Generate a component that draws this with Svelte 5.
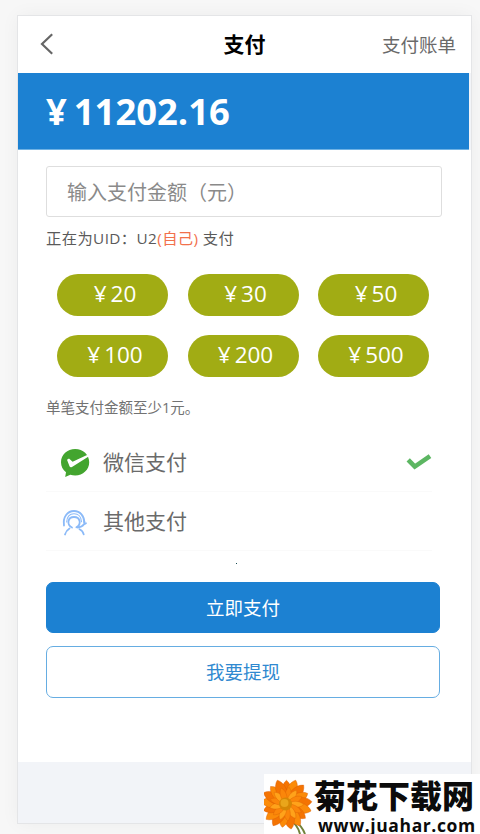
<script lang="ts">
	interface PayMethod {
		id: string;
		label: string;
	}

	const balance = 11202.16;
	const uid = 'U2';
	const presets = [20, 30, 50, 100, 200, 500];
	const methods: PayMethod[] = [
		{ id: 'wechat', label: '微信支付' },
		{ id: 'other', label: '其他支付' }
	];

	// outer and inner flower petals, in degrees
	const outerPetals = Array.from({ length: 17 }, (_, i) => i * (360 / 17));
	const innerPetals = Array.from({ length: 13 }, (_, i) => i * (360 / 13) + 9);

	let amount = $state('');
	let method = $state('wechat');
</script>

<div class="screen">
	<main class="phone">
		<header class="navbar">
			<button type="button" class="back" aria-label="返回">
				<svg width="14" height="22" viewBox="0 0 14 22">
					<path d="M12.2 1.3 2 11l10.2 9.7" fill="none" stroke="#666" stroke-width="2.2" />
				</svg>
			</button>
			<h1>支付</h1>
			<a class="bill" href="#bill">支付账单</a>
		</header>

		<section class="balance">
			<span class="yen">¥</span>{balance.toFixed(2)}
		</section>

		<section class="content">
			<input class="amount" type="text" placeholder="输入支付金额（元）" bind:value={amount} />
			<p class="target">正在为UID：{uid}<span class="self">(自己)</span> 支付</p>

			<div class="presets">
				{#each presets as preset}
					<button type="button" class="preset" onclick={() => (amount = String(preset))}>
						<span class="yen">¥</span>{preset}
					</button>
				{/each}
			</div>

			<p class="hint">单笔支付金额至少1元。</p>

			<div class="methods">
				{#each methods as item}
					<button type="button" class="method" onclick={() => (method = item.id)}>
						<span class="icon">
							{#if item.id === 'wechat'}
								<svg width="30" height="30" viewBox="0 0 30 30">
									<path
										d="M15.2 1C7.3 1 1 6.9 1 14.2c0 4.1 1.9 7.6 5 10.1L5.2 29l5.1-2.3c1.6.5 3.2.7 4.9.7 7.9 0 14-5.9 14-13.2S23.1 1 15.2 1Z"
										fill="#43a52f"
									/>
									<path d="m7 11.8 2-1.3 3.6 3.3L27.6 6.8 28.6 8.500 12 18.9c-1.2.6-2 .4-2.5-.7Z" fill="#fff" />
								</svg>
							{:else}
								<svg width="26" height="28" viewBox="0 0 26 28" fill="none" stroke="#8bbaf8" stroke-linecap="round">
									<path d="M2 17.5C.7 9 5.500 3 12 3c6.3 0 10.2 5 10.3 11.3" stroke-width="1.8" />
									<path d="M4.7 14C5 8.8 8 5.8 12 5.8c4.2 0 7.3 3 7.500 8" stroke-width="1.1" />
									<path d="M10 19.5C4.5 16.8 5.500 9 12 9c6.5 0 7.6 7.500 2.4 10.3" stroke-width="1.8" />
									<path d="M22.3 13.3v3l1.7-1M22 16.3c-1.5 2.2-4 3-6.5 3.200M3 26.5c.8-3 2.3-4.7 4.5-6M17.5 21.2c2.1 1 3.7 3 4.2 5.2" stroke-width="1.8" />
								</svg>
							{/if}
						</span>
						<span class="label">{item.label}</span>
						{#if method === item.id}
							<svg class="check" width="26" height="18" viewBox="0 0 26 18">
								<path d="m2.2 6.8 6.6 6.8L24 3.2" fill="none" stroke="#5cb662" stroke-width="4.6" />
							</svg>
						{/if}
					</button>
				{/each}
			</div>

			<button type="button" class="btn primary">立即支付</button>
			<button type="button" class="btn outline">我要提现</button>
			<i class="speck"></i>
		</section>
	</main>

	<aside class="brand">
		<svg class="flower" width="50" height="60" viewBox="0 0 50 60">
			<path d="M25 45q9 6 11 15M31 47q7 5 10 13" fill="none" stroke="#71823a" stroke-width="2" />
			<g transform="translate(22.5 30)">
				{#each outerPetals as angle, i}
					<path
						d="M0 0C-8-9-6-21 0-25.500 6-21 8-9 0 0Z"
						transform="rotate({angle}) scale({i % 3 ? 1 : 0.93})"
						fill={i % 2 ? '#fb8b09' : '#f47403'}
						stroke="#d95b04"
						stroke-width=".4"
					/>
				{/each}
				{#each innerPetals as angle, i}
					<path
						d="M0 0C-4-6-4-13 0-17 4-13 4-6 0 0Z"
						transform="rotate({angle})"
						fill={i % 2 ? '#ffa21a' : '#fb860a'}
						stroke="#dd6504"
						stroke-width=".4"
					/>
				{/each}
				<circle cx="-1" cy="0" r="6.5" fill="#d68705" />
				<circle cx="-2" cy="-1" r="4" fill="#e9a51b" />
			</g>
		</svg>
		<div class="brand-text">
			<strong>菊花下载网</strong>
			<span>www.juahar.com</span>
		</div>
	</aside>
</div>

<style>
	:global(body) {
		background: #f7f7f7;
	}

	.screen {
		position: relative;
		box-sizing: border-box;
		width: 480px;
		height: 834px;
		padding: 16px 9px 0 18px;
		overflow: hidden;
		font-family: 'Open Sans', 'Noto Sans CJK SC', sans-serif;
		color: #6a6a6a;
	}

	.phone {
		display: flex;
		flex-direction: column;
		height: 807px;
		background: #f2f4f8;
		box-shadow: 0 0 0 1px #e4e5e7, 0 0 18px rgba(0, 0, 0, 0.05);
	}

	button {
		margin: 0;
		padding: 0;
		border: 0;
		background: none;
		font: inherit;
		color: inherit;
	}

	.navbar {
		display: grid;
		grid-template-columns: 1fr auto 1fr;
		align-items: center;
		height: 57px;
		padding: 0 15px 2px 22px;
		box-sizing: border-box;
		background: #fff;
	}

	.back {
		justify-self: start;
		height: 22px;
		line-height: 0;
	}

	.navbar h1 {
		margin: 0 0 0 -7px;
		font-size: 21px;
		line-height: 30px;
		font-weight: 700;
		color: #000;
	}

	.bill {
		justify-self: end;
		font-size: 18.5px;
		color: #6a6a6a;
		text-decoration: none;
	}

	.balance {
		height: 77px;
		margin-right: 2px;
		padding-left: 28px;
		border-bottom: 1px solid #6fb2e4;
		box-sizing: border-box;
		background: #1c81d2;
		font-size: 36.4px;
		line-height: 77px;
		font-weight: 700;
		color: #fff;
	}

	.balance .yen {
		margin-right: 7px;
	}

	.content {
		position: relative;
		height: 612px;
		box-sizing: border-box;
		padding: 16px 31px 0 28px;
		background: #fff;
	}

	.amount {
		display: block;
		box-sizing: border-box;
		width: 396px;
		height: 51px;
		padding: 2px 20px 0;
		border: 1px solid #dedede;
		border-radius: 3px;
		background: #fff;
		font-family: inherit;
		font-size: 20px;
		color: #666;
	}

	.amount::placeholder {
		color: #8a8a8a;
		opacity: 1;
	}

	.target {
		margin: 9px 0 0;
		font-size: 15.3px;
		line-height: 24px;
		letter-spacing: 0.4px;
		color: #5a5a5a;
	}

	.self {
		color: #f2714c;
	}

	.presets {
		display: grid;
		grid-template-columns: repeat(3, 111px);
		gap: 19px 19.5px;
		margin: 24px 0 0 11px;
	}

	.preset {
		height: 42px;
		padding: 0 0 3px 5px;
		border-radius: 21px;
		background: #a1ac14;
		font-size: 22.5px;
		line-height: 39px;
		font-weight: 500;
		color: #fff;
	}

	.preset .yen {
		margin-right: 4px;
	}

	.hint {
		margin: 20px 0 0;
		font-size: 14.5px;
		line-height: 22px;
		color: #727272;
	}

	.methods {
		margin-top: 14px;
	}

	.method {
		display: flex;
		align-items: center;
		box-sizing: border-box;
		width: 386px;
		height: 59px;
		padding: 0 0 0 14px;
		border-bottom: 1px solid #fafafa;
		text-align: left;
	}

	.icon {
		display: flex;
		justify-content: center;
		width: 30px;
		padding-top: 2px;
	}

	.label {
		flex: 1;
		margin-left: 13px;
		font-size: 21px;
		line-height: 30px;
	}

	.btn {
		display: block;
		box-sizing: border-box;
		width: 394px;
		height: 51px;
		padding-bottom: 2px;
		border: 1px solid #1c81d2;
		border-radius: 7px;
		font-size: 18.5px;
	}

	.primary {
		margin-top: 31px;
		background: #1c81d2;
		color: #fff;
	}

	.outline {
		height: 52px;
		margin-top: 13px;
		border-color: #66ade2;
		background: #fff;
		color: #3089d0;
	}

	/* stray mark over the gap above the buttons */
	.speck {
		position: absolute;
		left: 218px;
		top: 413px;
		width: 1px;
		height: 1px;
		background: #174d52;
	}

	.brand {
		position: absolute;
		right: 0;
		bottom: 0;
		display: flex;
		width: 216px;
		height: 60px;
		background: #fff;
		color: #0b0b0b;
	}

	.flower {
		flex: none;
	}

	.brand-text {
		display: flex;
		flex-direction: column;
		white-space: nowrap;
	}

	.brand-text strong {
		height: 42px;
		font-size: 32px;
		line-height: 44px;
		font-weight: 900;
	}

	.brand-text span {
		margin-left: 4px;
		font-size: 17.5px;
		line-height: 18px;
		letter-spacing: 0.6px;
		font-weight: 700;
	}
</style>
